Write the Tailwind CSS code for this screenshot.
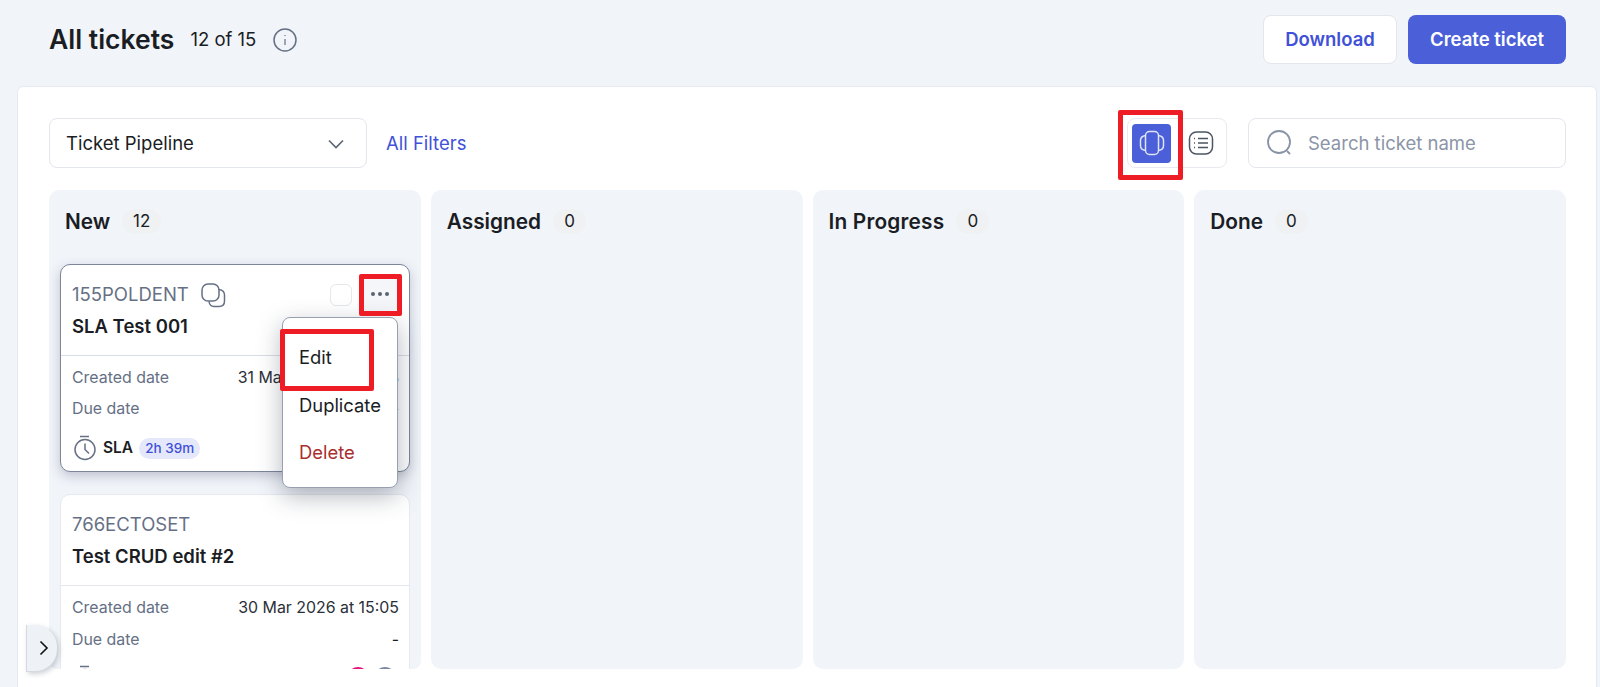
<!DOCTYPE html>
<html lang="en">
<head>
<meta charset="utf-8">
<script src="https://cdn.jsdelivr.net/npm/@tailwindcss/browser@4"></script>
<title>All tickets</title>
</head>
<body class="bg-[#f1f4f9] font-['Inter','Liberation_Sans',sans-serif] text-[#1a1d24] h-[687px] w-[1600px] overflow-hidden relative">
<header class="h-[86px] flex items-center justify-between pl-[49px] pr-[34px] pb-[8px] pt-[1px]">
  <div class="flex items-center">
    <h1 class="text-[26.500px] font-semibold leading-none">All tickets</h1>
    <span class="ml-[16px] text-[18.500px]">12 of 15</span>
    <svg class="ml-[17px]" width="24" height="24" viewBox="0 0 24 24" fill="none" stroke="#667085" stroke-width="1.5"><circle cx="12" cy="12" r="11"/><path d="M12 11v6M12 7v1" stroke-width="1.2"/></svg>
  </div>
  <div class="flex items-center gap-[11px]">
    <button class="w-[134px] h-[49px] bg-white border border-[#e3e6ec] rounded-[8px] text-[#3f51d8] font-semibold text-[18.500px]">Download</button>
    <button class="w-[158px] h-[49px] bg-[#4b5fd9] rounded-[8px] text-white font-semibold text-[18.500px]">Create ticket</button>
  </div>
</header>
<main class="ml-[17px] mr-[3px] h-[620px] bg-white border border-[#e6e9ef] rounded-t-[6px] pl-[31px] pr-[30px] pt-[31px]">
  <div class="flex items-center h-[50px]">
    <div class="w-[318px] h-[50px] border border-[#e3e6ec] rounded-[8px] flex items-center justify-between pl-[16px] pr-[22px] text-[18.500px] pt-[1px]">
      <span>Ticket Pipeline</span>
      <svg width="16" height="10" viewBox="0 0 16 10" fill="none" stroke="#5b6472" stroke-width="1.6"><path d="M1 1.5l7 7 7-7"/></svg>
    </div>
    <a class="ml-[19px] text-[18.500px] text-[#3f51d8] pt-[1px]">All Filters</a>
    <div class="ml-auto w-[100px] h-[50px] border border-[#e8eaef] rounded-[8px] flex items-center pl-[4px]">
      <div class="w-[39px] h-[39px] bg-[#4b5fd9] rounded-[4px] flex items-center justify-center">
        <svg width="26" height="26" viewBox="0 0 26 26" fill="none" stroke="#dfe4fb" stroke-width="1.5"><rect x="6.5" y="1.5" width="13" height="23" rx="4"/><path d="M6.5 5.5C3 6 1.5 8 1.5 10.5v5C1.5 18 3 20 6.5 20.5M19.5 5.5c3.500 .5 5 2.500 5 5v5c0 2.500-1.500 4.500-5 5"/></svg>
      </div>
      <svg class="ml-[17px]" width="26" height="26" viewBox="0 0 26 26" fill="none" stroke="#4b5563" stroke-width="1.5"><rect x="1.500" y="2" width="23" height="22" rx="7"/><path d="M10 8.500h10M10 13h10M10 17.500h10M6 8.500h1M6 13h1M6 17.500h1"/></svg>
    </div>
    <div class="ml-[21px] w-[318px] h-[50px] border border-[#e3e6ec] rounded-[8px] flex items-center pl-[18px] text-[18.500px] text-[#8b95a7]">
      <svg width="26" height="26" viewBox="0 0 26 26" fill="none" stroke="#8893a5" stroke-width="1.800"><circle cx="12" cy="12" r="11"/><path d="M20 21l3 3"/></svg>
      <span class="ml-[15px] pt-[1px]">Search ticket name</span>
    </div>
  </div>
  <div class="mt-[22px] grid grid-cols-4 gap-[10px] w-[1517px]">
    <section class="h-[479px] bg-[#f1f4f9] rounded-t-[10px] rounded-b-[8px] pl-[11px] overflow-hidden relative">
      <div class="flex items-center h-[62px] pl-[5px] pt-[1px]">
        <span class="font-semibold text-[20.800px]">New</span>
        <span class="ml-[12px] h-[25px] w-[39px] rounded-full bg-[#f0f1f3] text-[17px] flex items-center justify-center">12</span>
      </div>
      <article class="mt-[12px] w-[350px] h-[208px] bg-white rounded-[10px] border border-[#7c8599] shadow-[0_4px_12px_rgba(60,70,100,0.28)] relative">
        <div class="h-[90px] pl-[11px] pr-[10px] pt-[18px]">
          <div class="flex items-center h-[24px]">
            <span class="text-[#667085] text-[18.500px]">155POLDENT</span>
            <svg class="ml-[12px]" width="25" height="25" viewBox="0 0 25 25" fill="none" stroke="#667085" stroke-width="1.500"><rect x="1" y="1" width="17" height="17" rx="6"/><path d="M18 6.500c3 .5 5.500 2 5.500 5.500v6c0 3.500-2 5.500-5.500 5.500h-5c-2.500 0-4.500-1.500-5-5"/></svg>
            <span class="ml-auto mr-[47px] w-[22px] h-[22px] rounded-[6px] border border-[#e5e7eb] bg-white"></span>
          </div>
          <div class="mt-[6px] font-semibold text-[18.500px]">SLA Test 001</div>
        </div>
        <div class="border-t border-[#d9dde6] pl-[11px] pr-[10px] pt-[11px] text-[15.900px] relative h-[116px]">
          <div class="flex justify-between h-[21px] items-center"><span class="text-[#667085]">Created date</span><span class="text-[#2b2f38]">31 Mar 2026 at 09:48</span></div>
          <div class="flex justify-between h-[21px] items-center mt-[10px]"><span class="text-[#667085]">Due date</span><span>-</span></div>
          <div class="flex items-center mt-[16px]">
            <svg class="ml-[1px]" width="24" height="26" viewBox="0 0 24 26" fill="none" stroke="#667085" stroke-width="1.500"><path d="M7 1.500h9"/><circle cx="12" cy="14.500" r="10"/><path d="M12 8.500v6l4 4"/></svg>
            <span class="ml-[6px] font-semibold text-[15.500px]">SLA</span>
            <span class="ml-[6px] h-[21px] px-[6px] rounded-full bg-[#e4e8fa] text-[#3f51d8] text-[13.500px] font-medium flex items-center">2h 39m</span>
          </div>
        </div>
        <button class="absolute left-[301px] top-[12px] w-[35px] h-[34px] rounded-[4px] bg-[#f5f6f9] flex items-center justify-center gap-[3px]"><i class="block w-[4px] h-[4px] rounded-full bg-[#5b6472]"></i><i class="block w-[4px] h-[4px] rounded-full bg-[#5b6472]"></i><i class="block w-[4px] h-[4px] rounded-full bg-[#5b6472]"></i></button>
      </article>
      <article class="mt-[22px] w-[350px] h-[260px] bg-white rounded-[10px] border border-[#e6e9ef]">
        <div class="h-[90px] pl-[11px] pr-[10px] pt-[18px]">
          <div class="h-[24px] flex items-center text-[#667085] text-[18.500px]">766ECTOSET</div>
          <div class="mt-[6px] font-semibold text-[18.500px]">Test CRUD edit #2</div>
        </div>
        <div class="border-t border-[#e3e6ec] pl-[11px] pr-[10px] pt-[11px] text-[15.900px]">
          <div class="flex justify-between h-[21px] items-center"><span class="text-[#667085]">Created date</span><span class="text-[#2b2f38]">30 Mar 2026 at 15:05</span></div>
          <div class="flex justify-between h-[21px] items-center mt-[11px]"><span class="text-[#667085]">Due date</span><span>-</span></div>
          <div class="flex items-center justify-between mt-[15px]">
            <svg class="ml-[1px]" width="24" height="26" viewBox="0 0 24 26" fill="none" stroke="#667085" stroke-width="1.500"><path d="M7 1.500h9"/><circle cx="12" cy="14.500" r="10"/></svg>
            <span class="flex gap-[5px] mr-[3px]"><i class="block w-[22px] h-[22px] rounded-full bg-[#e6157a]"></i><i class="block w-[22px] h-[22px] rounded-full bg-[#7c88a5]"></i></span>
          </div>
        </div>
      </article>
    </section>
    <section class="h-[479px] bg-[#f1f4f9] rounded-[10px] px-[16px]"><div class="flex items-center h-[62px] pt-[1px]"><span class="font-semibold text-[20.800px]">Assigned</span><span class="ml-[12px] h-[25px] w-[33px] rounded-full bg-[#f0f1f3] text-[17px] flex items-center justify-center">0</span></div></section>
    <section class="h-[479px] bg-[#f1f4f9] rounded-[10px] px-[16px]"><div class="flex items-center h-[62px] pt-[1px]"><span class="font-semibold text-[20.800px] tracking-[0.010em]">In Progress</span><span class="ml-[12px] h-[25px] w-[33px] rounded-full bg-[#f0f1f3] text-[17px] flex items-center justify-center">0</span></div></section>
    <section class="h-[479px] bg-[#f1f4f9] rounded-[10px] px-[16px]"><div class="flex items-center h-[62px] pt-[1px]"><span class="font-semibold text-[20.800px]">Done</span><span class="ml-[12px] h-[25px] w-[33px] rounded-full bg-[#f0f1f3] text-[17px] flex items-center justify-center">0</span></div></section>
  </div>
</main>
<div class="absolute left-[282px] top-[317px] w-[116px] h-[171px] bg-white rounded-[8px] border border-[#98a0b0] shadow-[0_8px_24px_rgba(40,50,70,0.35)] pt-[27px] pl-[16px] text-[18.400px] flex flex-col gap-[22.500px] leading-[25px]">
  <span>Edit</span><span>Duplicate</span><span class="text-[#a92f2f]">Delete</span>
</div>
<button class="absolute left-[26px] top-[625px] w-[31px] h-[47px] bg-[#eef1f6] rounded-r-[22px] border-l border-b border-[#d5d9e2] shadow-[2px_2px_5px_rgba(60,70,90,0.25)] flex items-center justify-center pl-[3px]">
  <svg width="10" height="16" viewBox="0 0 10 16" fill="none" stroke="#111" stroke-width="1.600"><path d="M1.500 1.500L8 8l-6.500 6.500"/></svg>
</button>
<div class="absolute left-[1118px] top-[110px] w-[65px] h-[70px] border-[5px] border-[#ee1c25] rounded-[2px]"></div>
<div class="absolute left-[359px] top-[274px] w-[43px] h-[42px] border-[5px] border-[#ee1c25] rounded-[2px]"></div>
<div class="absolute left-[280px] top-[329px] w-[94px] h-[62px] border-[5px] border-[#ee1c25] rounded-[2px]"></div>
</body>
</html>
